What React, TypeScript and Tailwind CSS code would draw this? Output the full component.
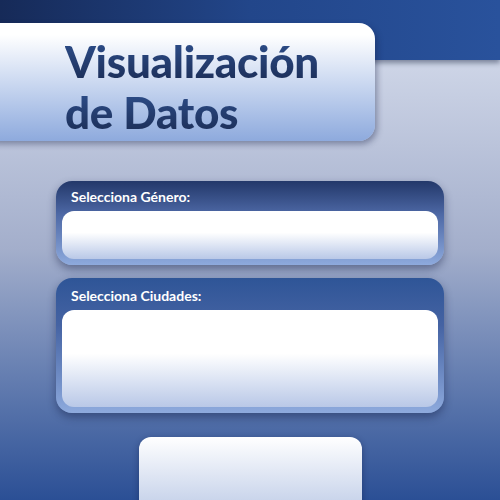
import React from 'react';

const font = { fontFamily: '"Lato", "Open Sans", sans-serif' };

function Panel({ label, boxHeight, top, tone }: { label: string; boxHeight: string; top: string; tone: string }) {
  return (
    <div className={`w-[388px] rounded-2xl px-[6px] pb-[6px] shadow-[0_4px_8px_rgba(20,30,70,0.45)] ${tone}`}>
      <div className={`pl-[9px] ${top} pb-[7px] text-[14px] font-bold leading-[15px] text-white`} style={font}>
        {label}
      </div>
      <div className={`${boxHeight} rounded-xl bg-gradient-to-b from-white from-45% to-[#b9c8e7]`} />
    </div>
  );
}

export default function App() {
  return (
    <div className="h-[500px] w-[500px] overflow-hidden bg-gradient-to-b from-[#dce2f0] via-[#a3aecb] via-50% to-[#2b4f95]">
      {/* Top bar */}
      <div className="h-[60px] bg-gradient-to-r from-[#162a58] via-[#22468a] via-50% to-[#29529c] shadow-[0_3px_5px_rgba(20,30,60,0.45)]" />

      {/* Title card */}
      <div className="relative -mt-[37px] -ml-[20px] w-[395px] h-[118px] rounded-2xl bg-gradient-to-b from-white from-10% to-[#8eaadd] shadow-[2px_3px_6px_rgba(20,30,70,0.4)] pl-[85px] pt-[13px]">
        <div className="text-[44px] font-black leading-[51px] tracking-[-0.3px]" style={font}>
          <span className="block w-fit bg-gradient-to-b from-[#2f5190] to-[#1a2b52] bg-clip-text text-transparent">Visualización</span>
          <span className="block w-fit bg-gradient-to-b from-[#2f5190] to-[#1a2b52] bg-clip-text text-transparent">de Datos</span>
        </div>
      </div>

      <div className="mt-[40px] flex flex-col items-center gap-[13px]">
        <Panel
          label="Selecciona Género:"
          boxHeight="h-[48px]"
          top="pt-[8px]"
          tone="bg-gradient-to-b from-[#23386a] via-[#4e69a6] via-40% to-[#8eaadd]"
        />
        <Panel
          label="Selecciona Ciudades:"
          boxHeight="h-[97px]"
          top="pt-[10px]"
          tone="bg-gradient-to-b from-[#2e5597] via-[#4563a3] via-35% to-[#8eaadd]"
        />
        <div className="mt-[11px] h-[80px] w-[223px] rounded-xl bg-gradient-to-b from-white to-[#bccae6] shadow-[0_2px_6px_rgba(20,30,70,0.45)]" />
      </div>
    </div>
  );
}
